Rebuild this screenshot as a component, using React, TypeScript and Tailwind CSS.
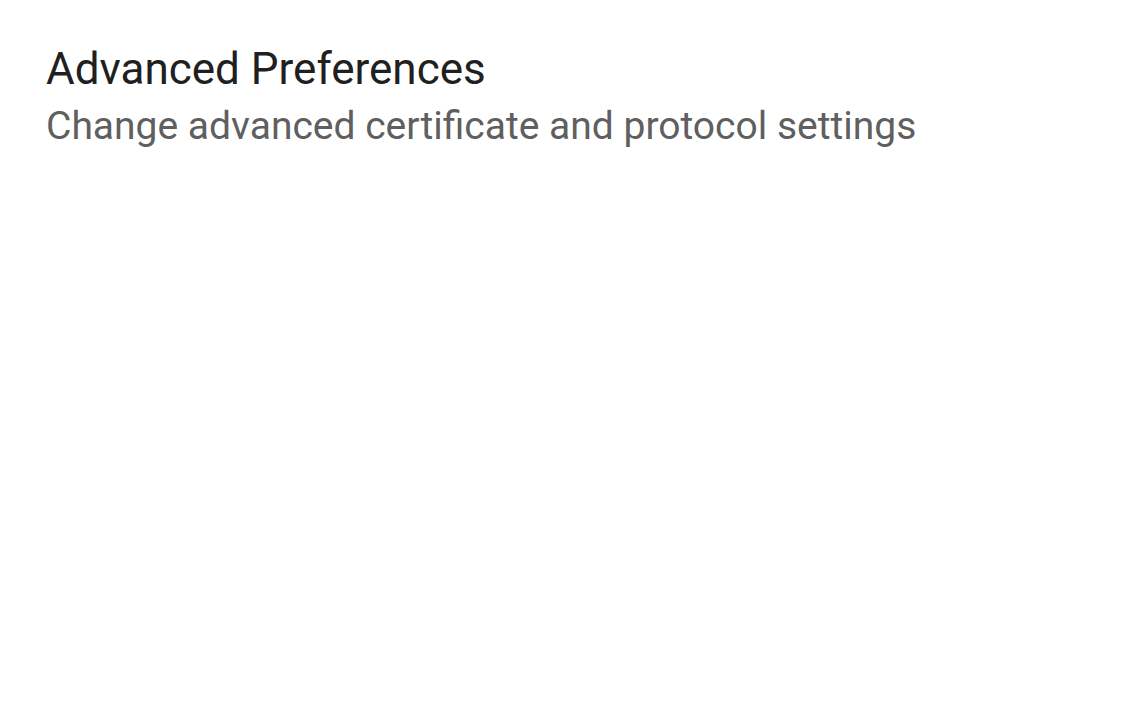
import React from 'react';

const App: React.FC = () => {
  return (
    <div className="w-[1146px] h-[716px] bg-white font-['Roboto',sans-serif] overflow-hidden">
      {/* Preference row */}
      <div className="pl-[46px] pt-[41px]">
        <div className="text-[44px] leading-[56px] text-[#202020]">Advanced Preferences</div>
        <div className="mt-px text-[39px] leading-[56px] text-[#5f5f5f]">
          Change advanced certificate and protocol settings
        </div>
      </div>
    </div>
  );
};

export default App;
